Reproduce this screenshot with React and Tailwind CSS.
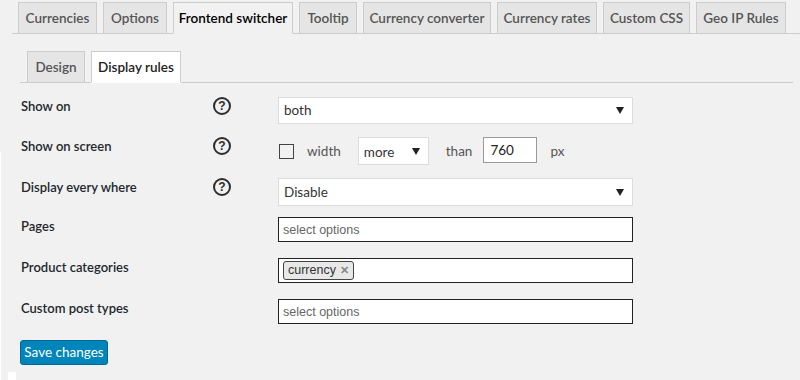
import React from "react";

const font = { fontFamily: 'Lato, "Noto Sans", sans-serif' };
const arial = { fontFamily: '"Liberation Sans", Arial, sans-serif' };

function Arrow() {
  return (
    <svg width="8" height="7" viewBox="0 0 8 7" className="shrink-0">
      <path d="M0 0 H8 L4 7 Z" fill="#222" />
    </svg>
  );
}

function Help() {
  return (
    <span
      className="flex h-[18px] w-[18px] items-center justify-center rounded-full border-2 border-[#2c2c2c] text-[12px] font-black leading-none text-[#2c2c2c]"
      style={arial}
    >
      ?
    </span>
  );
}

const mainTabs = [
  ["Currencies", 79],
  ["Options", 64],
  ["Frontend switcher", 120],
  ["Tooltip", 58],
  ["Currency converter", 128],
  ["Currency rates", 100],
  ["Custom CSS", 87],
  ["Geo IP Rules", 90],
];

function Row({ label, help, children, className = "" }) {
  return (
    <div className={"flex items-start " + className}>
      <div className="w-[213px] shrink-0 pl-[21px] text-[13px] font-semibold leading-[18px] text-[#23282d]">
        {label}
      </div>
      <div className="w-[65px] shrink-0">{help ? <Help /> : null}</div>
      <div className="flex-1">{children}</div>
    </div>
  );
}

export default function App() {
  return (
    <div className="relative h-[380px] w-[800px] overflow-hidden bg-[#f1f1f1] text-[#23282d]" style={font}>
      <div className="absolute left-0 top-[152px] h-[228px] w-[1px] bg-white" />
      <div className="absolute left-[8px] top-[372px] h-[8px] w-[8px] bg-white" />
      {/* main tabs */}
      <div className="ml-[12px] flex h-[34px] items-end gap-[6px] border-b border-[#cccccc] pl-[6px] pt-[2px]">
        {mainTabs.map(([t, w]) => {
          const active = t === "Frontend switcher";
          return (
            <div
              key={t}
              style={{ width: w }}
              className={
                "-mb-px flex h-[32px] shrink-0 items-center justify-center whitespace-nowrap border border-[#cccccc] text-[13.5px] font-semibold " +
                (active
                  ? "border-b-[#f1f1f1] bg-[#f1f1f1] text-[#000]"
                  : "bg-[#e5e5e5] text-[#555]")
              }
            >
              {t}
            </div>
          );
        })}
      </div>
      {/* sub tabs */}
      <div className="ml-[20px] mr-[7px] mt-[17px] flex h-[32px] items-end gap-[6px] border-b border-[#cccccc] pl-[7px]">
        <div className="-mb-px flex h-[32px] w-[58px] items-center justify-center border border-[#cccccc] bg-[#e5e5e5] text-[13.5px] font-semibold text-[#555]">
          Design
        </div>
        <div className="-mb-px flex h-[32px] w-[90px] items-center justify-center border border-[#cccccc] border-b-white bg-white text-[13.5px] font-semibold text-[#222]">
          Display rules
        </div>
      </div>

      <div className="mt-[14px]">
        <Row label="Show on" help>
          <div className="flex h-[27px] w-[355px] items-center justify-between border border-[#dddddd] bg-white pl-[5px] pr-[8px] text-[13.5px] text-[#333]">
            <span>both</span>
            <Arrow />
          </div>
        </Row>

        <Row label="Show on screen" help className="mt-[13px]">
          <div className="flex h-[28px] items-center text-[13.5px] text-[#555]">
            <span className="ml-[1px] h-[15px] w-[15px] border border-[#444]" />
            <span className="ml-[13px]">width</span>
            <div className="ml-[17px] flex h-[28px] w-[71px] items-center justify-between border border-[#dddddd] bg-white pl-[5px] pr-[8px] text-[#333]">
              <span className="pt-[2px]">more</span>
              <Arrow />
            </div>
            <span className="ml-[17px]">than</span>
            <div className="ml-[11px] flex h-[26px] w-[54px] items-center self-start border border-[#999] bg-white pl-[6px] text-[#222]">
              760
            </div>
            <span className="ml-[13px]">px</span>
          </div>
        </Row>

        <Row label="Display every where" help className="mt-[13px]">
          <div className="flex h-[28px] w-[355px] items-center justify-between border border-[#dddddd] bg-white pl-[5px] pr-[8px] text-[13.5px] text-[#333]">
            <span>Disable</span>
            <Arrow />
          </div>
        </Row>

        <Row label="Pages" className="mt-[11px]">
          <div
            className="flex h-[25px] w-[355px] items-center border border-[#222] bg-white pl-[4px] pt-[2px] text-[12.5px] text-[#666]"
            style={arial}
          >
            select options
          </div>
        </Row>

        <Row label="Product categories" className="mt-[16px]">
          <div
            className="flex h-[25px] w-[355px] items-center border border-[#222] bg-white pl-[4px] text-[12.5px] text-[#333]"
            style={arial}
          >
            <span className="flex h-[19px] items-center gap-[4px] rounded-[3px] border border-[#444] bg-[#e8e8e8] pl-[4px] pr-[4px]">
              currency
              <span className="text-[11px] font-bold text-[#888]">✕</span>
            </span>
          </div>
        </Row>

        <Row label="Custom post types" className="mt-[16px]">
          <div
            className="flex h-[25px] w-[355px] items-center border border-[#222] bg-white pl-[4px] pt-[2px] text-[12.5px] text-[#666]"
            style={arial}
          >
            select options
          </div>
        </Row>

        <div className="ml-[20px] mt-[16px] flex h-[25px] w-[88px] items-center justify-center rounded-[3px] border border-[#006799] bg-[#0085ba] text-[13.5px] text-white">
          Save changes
        </div>
      </div>
    </div>
  );
}
